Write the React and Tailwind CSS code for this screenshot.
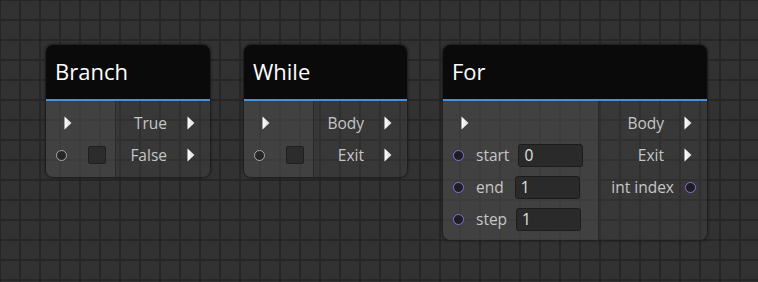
import React from 'react';

function Arrow() {
    return (
        <svg width="8" height="14" viewBox="0 0 8 14" className="shrink-0">
            <defs>
                <linearGradient id="ag" x1="0" y1="0" x2="1" y2="0">
                    <stop offset="0" stopColor="#ffffff" />
                    <stop offset="1" stopColor="#d8d8d8" />
                </linearGradient>
            </defs>
            <polygon points="0.5,0.5 7.5,7 0.5,13.5" fill="url(#ag)" />
        </svg>
    );
}

function Pin({ purple }) {
    return (
        <span
            className={
                purple
                    ? 'block w-[11px] h-[11px] rounded-full border-[1.5px] border-[#8473d6] bg-[#1d1d22] shrink-0'
                    : 'block w-[11px] h-[11px] rounded-full border-[1.5px] border-[#a8a8a8] bg-[#262626] shrink-0'
            }
        />
    );
}

function Node({ title, className, left, right }) {
    return (
        <div className={'absolute flex flex-col rounded-[8px] overflow-hidden border border-[#1f1f1f] shadow-[0_0_3px_rgba(0,0,0,0.4)] ' + className}>
            <div className="h-[54px] bg-[#0a0a0a] flex items-center pl-[9px] pb-[2px] text-white text-[22px]">
                {title}
            </div>
            <div className="h-[2px] bg-[#4a8fdb]" />
            <div className="flex flex-1">
                <div className="bg-[rgba(78,78,78,0.55)] border-r border-[#2a2a2a] pt-[6px]">{left}</div>
                <div className="flex-1 bg-[rgba(64,64,64,0.4)] pt-[6px]">{right}</div>
            </div>
        </div>
    );
}

function OutRow({ label, pin }) {
    return (
        <div className={'h-[32px] flex items-center justify-end ' + (pin ? 'pr-[11px] gap-[11px]' : 'pr-[15px] gap-[20px]')}>
            <span className="mt-[2px] text-[#c6c6c6] text-[15.5px]">{label}</span>
            {pin ? <Pin purple /> : <Arrow />}
        </div>
    );
}

function BoolLeft() {
    return (
        <div className="w-[69px]">
            <div className="h-[32px] flex items-center pl-[18px]"><Arrow /></div>
            <div className="h-[32px] flex items-center pl-[10px]">
                <Pin />
                <span className="ml-[21px] w-[18px] h-[18px] rounded-[2px] bg-[#2c2c2c] border border-[#1f1f1f]" />
            </div>
        </div>
    );
}

function NumRow({ label, value, gap }) {
    return (
        <div className="h-[32px] flex items-center pl-[10px]">
            <Pin purple />
            <span className="ml-[12px] mt-[2px] text-[#c6c6c6] text-[15.5px]">{label}</span>
            <span className={'h-[23px] w-[65px] rounded-[3px] bg-[#2a2a2a] border border-[#1c1c1c] text-[#e2e2e2] text-[15.5px] flex items-center pl-[5px] pt-[2px] ' + gap}>
                {value}
            </span>
        </div>
    );
}

export default function App() {
    return (
        <div
            className="relative w-[758px] h-[282px] overflow-hidden bg-[#323232] bg-[linear-gradient(to_right,#262626_2px,transparent_2px),linear-gradient(to_bottom,#262626_2px,transparent_2px)] bg-[size:20px_20px] bg-[position:19px_19px]"
            style={{ fontFamily: '"Open Sans", "Noto Sans", sans-serif' }}
        >
            <Node
                title="Branch"
                className="left-[45px] top-[44px] w-[166px] h-[134px]"
                left={<BoolLeft />}
                right={<><OutRow label="True" /><OutRow label="False" /></>}
            />
            <Node
                title="While"
                className="left-[243px] top-[44px] w-[165px] h-[134px]"
                left={<BoolLeft />}
                right={<><OutRow label="Body" /><OutRow label="Exit" /></>}
            />
            <Node
                title="For"
                className="left-[442px] top-[44px] w-[266px] h-[197px]"
                left={
                    <div className="w-[155px]">
                        <div className="h-[32px] flex items-center pl-[18px]"><Arrow /></div>
                        <NumRow label="start" value="0" gap="ml-[9px]" />
                        <NumRow label="end" value="1" gap="ml-[11px]" />
                        <NumRow label="step" value="1" gap="ml-[9px]" />
                    </div>
                }
                right={<><OutRow label="Body" /><OutRow label="Exit" /><OutRow label="int index" pin /></>}
            />
        </div>
    );
}
